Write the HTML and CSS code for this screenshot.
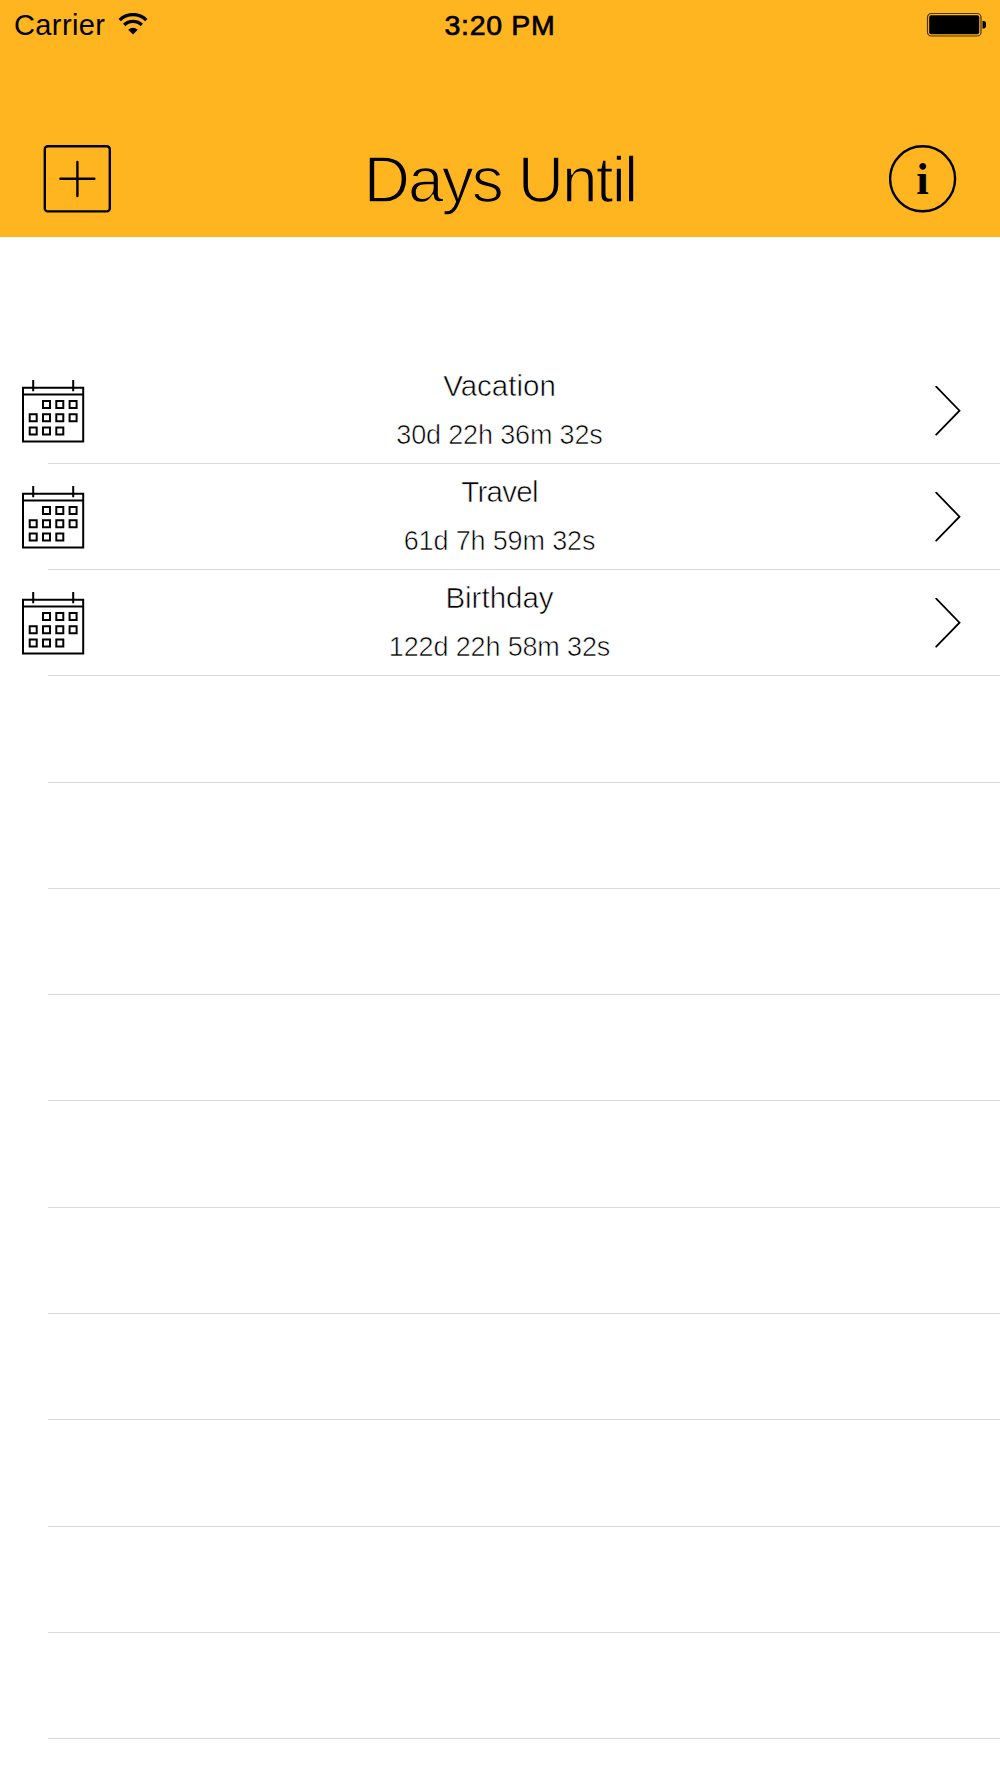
FILE: index.html
```html
<!DOCTYPE html>
<html lang="en">
<head>
<meta charset="utf-8">
<title>Days Until</title>
<link rel="stylesheet" href="styles.css">
</head>
<body>
<svg class="defs" width="0" height="0" aria-hidden="true">
  <symbol id="calendar" viewBox="0 0 64 64">
    <g fill="none" stroke="#000" stroke-width="2">
      <path d="M2 8.7H62.2V62.5H2Z"/>
      <path d="M1 15.5H63M12.2 1V12.2M52.2 1V12.2"/>
      <path d="M22 22h7v7h-7zM35.3 22h7v7h-7zM48.6 22h7v7h-7zM8.7 35.3h7v7h-7zM22 35.3h7v7h-7zM35.3 35.3h7v7h-7zM48.6 35.3h7v7h-7zM8.7 48.6h7v7h-7zM22 48.6h7v7h-7zM35.3 48.6h7v7h-7z"/>
    </g>
  </symbol>
  <symbol id="chevron" viewBox="0 0 26 52">
    <path d="M1.2 .7L24.5 24.7L1.2 48.7" fill="none" stroke="#000" stroke-width="1.8" stroke-linecap="round"/>
  </symbol>
</svg>
<header class="header">
  <div class="status">
    <div class="network">
      <span class="carrier">Carrier</span>
      <svg class="wifi" width="30" height="22" viewBox="0 0 30 22">
        <path d="M1.7 7.1A18.8 18.8 0 0 1 28.3 7.1M6.2 12A12.4 12.4 0 0 1 23.8 12" fill="none" stroke="#000" stroke-width="3.4"/>
        <path d="M15 21.6L10.2 16.7Q15 12.6 19.8 16.7Z"/>
      </svg>
    </div>
    <span class="clock">3:20 PM</span>
    <svg class="battery" width="60" height="25" viewBox="0 0 60 25">
      <rect x="1.5" y="1.5" width="53.5" height="22.5" rx="3.8" fill="none" stroke="#4d3608" stroke-width="1.2"/>
      <rect x="3.2" y="3.2" width="50" height="19" rx="2"/>
      <path d="M56.5 8.7a4 4 0 0 1 0 8z"/>
    </svg>
  </div>
  <div class="bar">
    <svg class="icon" width="68" height="68" viewBox="0 0 68 68">
      <g fill="none" stroke="#000" stroke-width="2.4" stroke-linecap="round">
        <rect x="1.8" y="1.2" width="65" height="65.2" rx="3"/>
        <path d="M34.4 17V51M17.4 33.8H51.4"/>
      </g>
    </svg>
    <h1 class="title">Days Until</h1>
    <svg class="icon" width="68" height="68" viewBox="0 0 68 68">
      <circle cx="33.6" cy="33.8" r="32.5" fill="none" stroke="#000" stroke-width="2.4"/>
      <text class="info" x="33.6" y="48.8" text-anchor="middle">i</text>
    </svg>
  </div>
</header>
<main class="list">
  <div class="row">
    <svg class="calendar"><use href="#calendar"/></svg>
    <div class="event"><div class="name">Vacation</div><div class="time">30d 22h 36m 32s</div></div>
    <svg class="chevron"><use href="#chevron"/></svg>
  </div>
  <div class="row">
    <svg class="calendar"><use href="#calendar"/></svg>
    <div class="event"><div class="name tight">Travel</div><div class="time">61d 7h 59m 32s</div></div>
    <svg class="chevron"><use href="#chevron"/></svg>
  </div>
  <div class="row">
    <svg class="calendar"><use href="#calendar"/></svg>
    <div class="event"><div class="name">Birthday</div><div class="time">122d 22h 58m 32s</div></div>
    <svg class="chevron"><use href="#chevron"/></svg>
  </div>
  <div class="row"></div>
  <div class="row"></div>
  <div class="row"></div>
  <div class="row"></div>
  <div class="row"></div>
  <div class="row"></div>
  <div class="row"></div>
  <div class="row"></div>
  <div class="row"></div>
  <div class="row"></div>
</main>
</body>
</html>
```

FILE: styles.css
```css
* {
  box-sizing: border-box;
}

body {
  margin: 0;
  height: 1778px;
  overflow: hidden;
  background: #fff;
  color: #000;
  font-family: "Liberation Sans", Arial, sans-serif;
}

svg {
  display: block;
  flex: none;
}

.defs {
  display: none;
}

.header {
  height: 237px;
  background: #ffb520;
}

.status {
  display: grid;
  grid-template-columns: 1fr auto 1fr;
  height: 50px;
  padding: 0 14px;
}

.network {
  display: flex;
  gap: 13px;
}

.carrier {
  font-size: 29px;
  line-height: 51px;
  letter-spacing: 0.4px;
}

.wifi {
  margin-top: 13px;
}

.clock {
  font-size: 28.5px;
  line-height: 51px;
  letter-spacing: 0.7px;
  -webkit-text-stroke: 0.7px #000;
}

.battery {
  justify-self: end;
  margin-top: 12px;
}

.bar {
  display: flex;
  justify-content: space-between;
  align-items: flex-start;
  padding: 95px 43px 0;
}

/* A stroke in the background colour slims the letters to a light weight. */
.title {
  margin: 0;
  padding-top: 1px;
  font-size: 64px;
  font-weight: 400;
  line-height: 68px;
  letter-spacing: -1.9px;
  -webkit-text-stroke: 1.5px #ffb520;
}

.info {
  font: 700 45px "Liberation Serif", serif;
}

.list {
  padding-top: 120.6px;
}

.row {
  display: flex;
  justify-content: space-between;
  height: 106.27px;
  padding: 0 39px 0 21px;
  background: linear-gradient(#d9d9d9, #d9d9d9) 48px 100% / 100% 1px no-repeat;
}

.calendar {
  width: 64px;
  height: 64px;
  margin-top: 21px;
}

.chevron {
  width: 26px;
  height: 52px;
  margin-top: 28px;
}

.event {
  width: 400px;
  padding-top: 10px;
  margin-right: 21px;
  text-align: center;
  -webkit-text-stroke: 0.6px #fff;
}

.name {
  font-size: 29.5px;
  line-height: 36px;
}

.tight {
  letter-spacing: -0.7px;
}

.time {
  margin-top: 13px;
  font-size: 27px;
  line-height: 36px;
  letter-spacing: -0.15px;
}
```
